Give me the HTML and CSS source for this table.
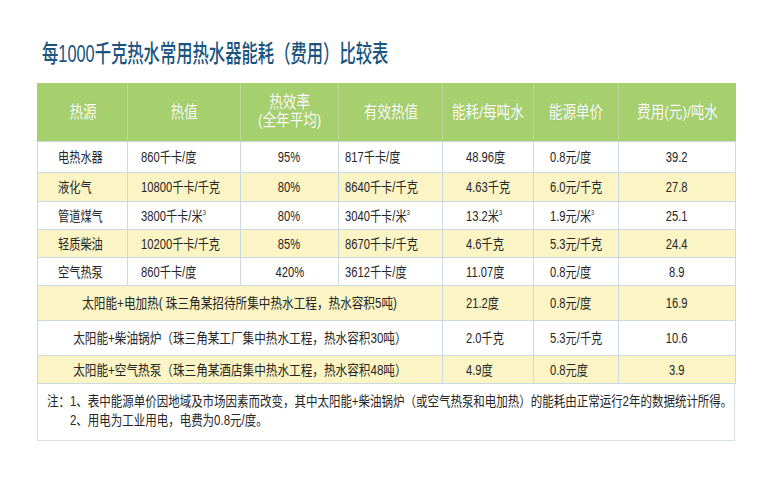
FILE: index.html
```html
<!DOCTYPE html>
<html lang="zh-CN">
<head>
<meta charset="utf-8">
<title>每1000千克热水常用热水器能耗（费用）比较表</title>
<link rel="stylesheet" href="styles.css">
</head>
<body>
<div class="page">
  <h1 class="title"><span class="sq">每1000千克热水常用热水器能耗（费用）比较表</span></h1>
  <table class="grid">
    <colgroup>
      <col class="w1"><col class="w2"><col class="w3"><col class="w4"><col class="w5"><col class="w6"><col class="w7">
    </colgroup>
    <thead>
      <tr>
        <th><span class="hs">热源</span></th>
        <th><span class="hs">热值</span></th>
        <th><span class="hs two">热效率<br>(全年平均)</span></th>
        <th><span class="hs">有效热值</span></th>
        <th><span class="hs">能耗/每吨水</span></th>
        <th><span class="hs">能源单价</span></th>
        <th><span class="hs">费用(元)/吨水</span></th>
      </tr>
    </thead>
    <tbody>
      <tr class="r1">
        <td class="c1"><span class="s">电热水器</span></td>
        <td class="c2"><span class="s">860千卡/度</span></td>
        <td class="c3"><span class="s sc">95%</span></td>
        <td class="c4"><span class="s">817千卡/度</span></td>
        <td class="c5"><span class="s">48.96度</span></td>
        <td class="c6"><span class="s">0.8元/度</span></td>
        <td class="c7"><span class="s sc">39.2</span></td>
      </tr>
      <tr class="y r2">
        <td class="c1"><span class="s">液化气</span></td>
        <td class="c2"><span class="s">10800千卡/千克</span></td>
        <td class="c3"><span class="s sc">80%</span></td>
        <td class="c4"><span class="s">8640千卡/千克</span></td>
        <td class="c5"><span class="s">4.63千克</span></td>
        <td class="c6"><span class="s">6.0元/千克</span></td>
        <td class="c7"><span class="s sc">27.8</span></td>
      </tr>
      <tr class="r3">
        <td class="c1"><span class="s">管道煤气</span></td>
        <td class="c2"><span class="s">3800千卡/米<sup>3</sup></span></td>
        <td class="c3"><span class="s sc">80%</span></td>
        <td class="c4"><span class="s">3040千卡/米<sup>3</sup></span></td>
        <td class="c5"><span class="s">13.2米<sup>3</sup></span></td>
        <td class="c6"><span class="s">1.9元/米<sup>3</sup></span></td>
        <td class="c7"><span class="s sc">25.1</span></td>
      </tr>
      <tr class="y r3">
        <td class="c1"><span class="s">轻质柴油</span></td>
        <td class="c2"><span class="s">10200千卡/千克</span></td>
        <td class="c3"><span class="s sc">85%</span></td>
        <td class="c4"><span class="s">8670千卡/千克</span></td>
        <td class="c5"><span class="s">4.6千克</span></td>
        <td class="c6"><span class="s">5.3元/千克</span></td>
        <td class="c7"><span class="s sc">24.4</span></td>
      </tr>
      <tr class="r3">
        <td class="c1"><span class="s">空气热泵</span></td>
        <td class="c2"><span class="s">860千卡/度</span></td>
        <td class="c3"><span class="s sc">420%</span></td>
        <td class="c4"><span class="s">3612千卡/度</span></td>
        <td class="c5"><span class="s">11.07度</span></td>
        <td class="c6"><span class="s">0.8元/度</span></td>
        <td class="c7"><span class="s sc">8.9</span></td>
      </tr>
      <tr class="y r4">
        <td class="cs" colspan="4"><span class="s sc wide">太阳能+电加热( 珠三角某招待所集中热水工程，热水容积5吨)</span></td>
        <td class="c5"><span class="s">21.2度</span></td>
        <td class="c6"><span class="s">0.8元/度</span></td>
        <td class="c7"><span class="s sc">16.9</span></td>
      </tr>
      <tr class="r4">
        <td class="cs" colspan="4"><span class="s sc wide">太阳能+柴油锅炉（珠三角某工厂集中热水工程，热水容积30吨）</span></td>
        <td class="c5"><span class="s">2.0千克</span></td>
        <td class="c6"><span class="s">5.3元/千克</span></td>
        <td class="c7"><span class="s sc">10.6</span></td>
      </tr>
      <tr class="y r3">
        <td class="cs" colspan="4"><span class="s sc wide">太阳能+空气热泵（珠三角某酒店集中热水工程，热水容积48吨）</span></td>
        <td class="c5"><span class="s">4.9度</span></td>
        <td class="c6"><span class="s">0.8元度</span></td>
        <td class="c7"><span class="s sc">3.9</span></td>
      </tr>
    </tbody>
  </table>
  <div class="notes">
    <p class="note"><span class="ns">注：1、表中能源单价因地域及市场因素而改变，其中太阳能+柴油锅炉（或空气热泵和电加热）的能耗由正常运行2年的数据统计所得。</span></p>
    <p class="note"><span class="ns ind">2、用电为工业用电，电费为0.8元/度。</span></p>
  </div>
</div>
</body>
</html>
```

FILE: styles.css
```css
html, body {
  margin: 0;
  padding: 0;
  background: #ffffff;
}

body {
  font-family: "Liberation Sans", "Noto Sans CJK SC", sans-serif;
  color: #262626;
  overflow: hidden;
}

.page {
  padding: 38px 0 0 37px;
  width: 698px;
}

.title {
  margin: 0 0 13px 0;
  padding-left: 5px;
  font-size: 24px;
  line-height: 32px;
  font-weight: 500;
  color: #1a5580;
  white-space: nowrap;
  overflow: hidden;
}

.sq {
  display: inline-block;
  transform: scaleX(0.68);
  transform-origin: left center;
}

.grid {
  width: 698px;
  table-layout: fixed;
  border-collapse: collapse;
}

.w1 { width: 90px; }
.w2 { width: 113px; }
.w3 { width: 98px; }
.w4 { width: 104px; }
.w5 { width: 91px; }
.w6 { width: 85px; }
.w7 { width: 117px; }

.grid th {
  height: 58px;
  padding: 0;
  background: #a6d06e;
  color: #ffffff;
  font-weight: normal;
  font-size: 17px;
  line-height: 19px;
  text-align: center;
  vertical-align: middle;
  border-left: 1px solid #b9da90;
  white-space: nowrap;
}

.grid th:first-child {
  border-left: 1px solid #a6d06e;
}

.hs {
  display: inline-block;
  transform: scaleX(0.8);
  transform-origin: center center;
  text-shadow: 0 0 1px rgba(90, 130, 40, 0.35);
}

.two {
  line-height: 18px;
}

.grid td {
  padding: 0;
  font-size: 14px;
  line-height: 16px;
  border: 1px solid #cbd9e0;
  vertical-align: middle;
  white-space: nowrap;
  background: #ffffff;
}

.grid tr.y td {
  background: #fbf4c4;
}

.r1 td { height: 30px; }
.r2 td { height: 28px; }
.r3 td { height: 27px; }
.r4 td { height: 34px; }

.s {
  display: inline-block;
  transform: scaleX(0.8);
  transform-origin: left center;
}

.s.sc {
  transform-origin: center center;
}

.s.wide {
  transform: scaleX(0.83);
}

.s sup {
  font-size: 7px;
  line-height: 0;
  vertical-align: 6px;
}

.c1 { padding-left: 20px !important; }
.c2 { padding-left: 13px !important; }
.c3 { text-align: center; }
.c4 { padding-left: 6px !important; }
.c5 { padding-left: 23px !important; }
.c6 { padding-left: 16px !important; }
.c7 { text-align: center; }
.cs { text-align: center; overflow: hidden; }

.notes {
  height: 48px;
  padding: 8px 0 0 9px;
  border: 1px solid #d6e2e7;
  border-top: none;
  background: #ffffff;
  overflow: hidden;
}

.note {
  margin: 0;
  font-size: 14px;
  line-height: 19px;
  white-space: nowrap;
}

.ns {
  display: inline-block;
  transform: scaleX(0.82);
  transform-origin: left center;
}

.ind {
  padding-left: 28px;
}
```
